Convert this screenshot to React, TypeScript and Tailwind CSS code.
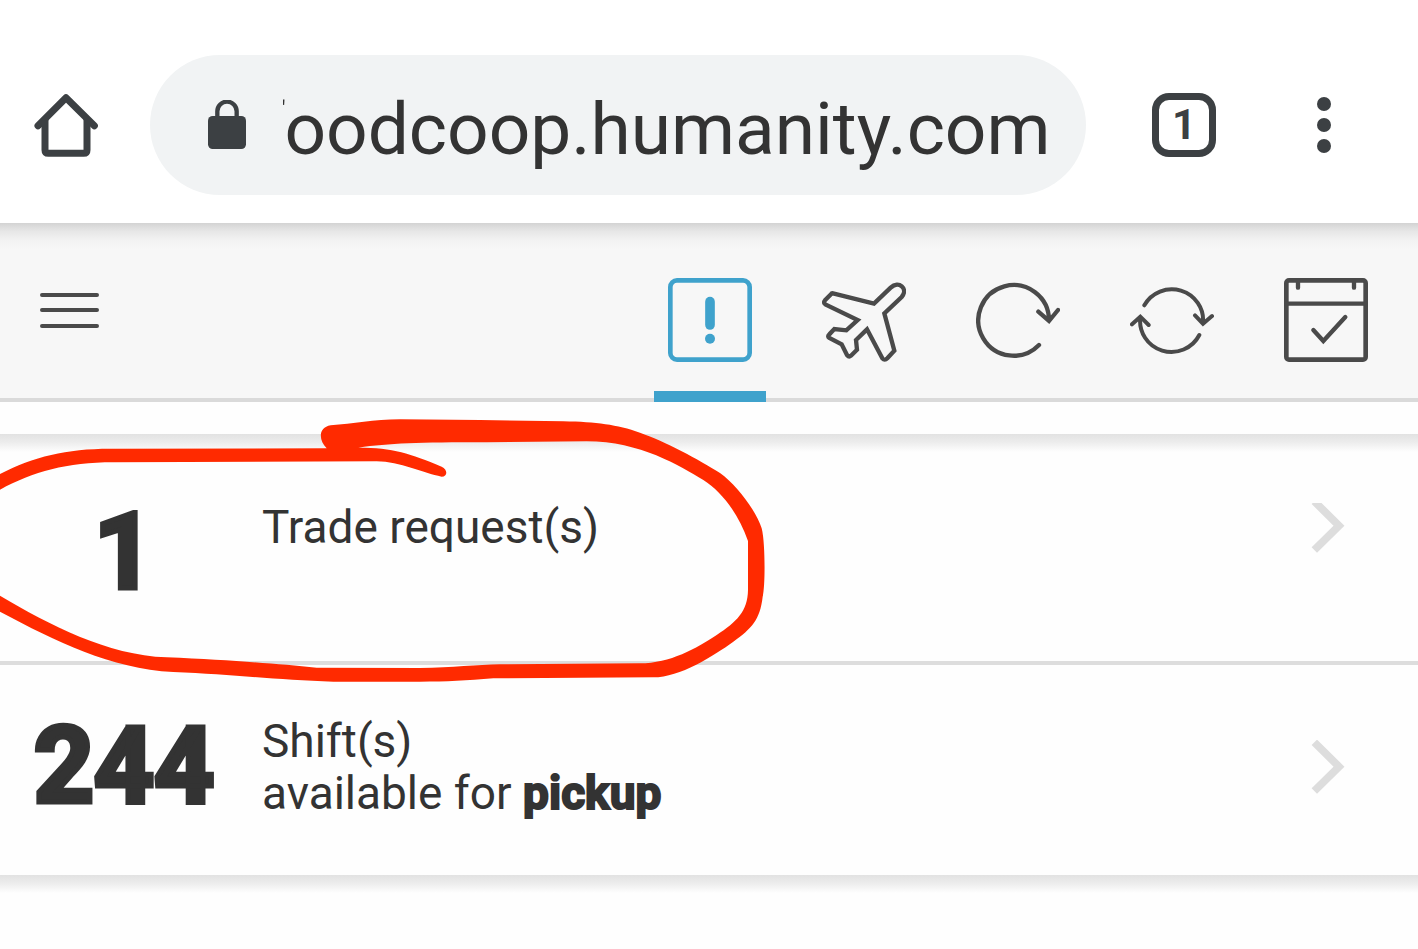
import { useLayoutEffect, useRef, type ReactNode } from "react";

function HomeIcon() {
  return (
    <svg viewBox="102 98 192 192" className="size-16" fill="none" stroke="#3c4043" strokeWidth="21" aria-hidden="true">
      <path d="M114 196 198 112 283 196" strokeLinecap="round" strokeLinejoin="round" />
      <path d="M135 176V269Q135 279 145 279H251Q261 279 261 269V176" />
    </svg>
  );
}

function LockIcon() {
  return (
    <svg viewBox="624 118 114 150" className="h-[50px] w-[38px] shrink-0" aria-hidden="true">
      <path d="M652 175V152a29 29 0 0 1 58 0V175" fill="none" stroke="#3c4043" strokeWidth="13" />
      <rect x="624" y="166" width="114" height="99" rx="14" fill="#3c4043" />
    </svg>
  );
}

function AlertIcon() {
  return (
    <>
      <rect x="7" y="7" width="238" height="238" rx="20" strokeWidth="14" />
      <path d="M126 71V141" strokeWidth="29" />
      <circle cx="126" cy="182" r="15" fill="currentColor" stroke="none" />
    </>
  );
}

function PlaneIcon() {
  return (
    <path d="M33 46 156 77 206 29C230 6 260 32 239 57L187 106 217 218 196 241Q188 249 181 241L135 154 102 186 105 215 87 233Q81 238 75 231L59 199 22 180Q15 175 22 169L37 153 73 157 107 126 10 79Q3 74 9 67L27 49Q29 45 33 46Z" />
  );
}

function RedoIcon() {
  return <path d="M189 201A106 106 0 1 1 219 127M187 101 219 129 246 96" />;
}

function SwapIcon() {
  return (
    <path
      strokeWidth="12"
      d="M43 82A94 93 0 0 1 219 135M195 112 219 137 246 114M208 171A94 93 0 0 1 31 117M6 139 31 116 56 141"
    />
  );
}

function CalendarIcon() {
  return (
    <>
      <rect x="7" y="7" width="238" height="238" rx="8" strokeWidth="14" />
      <path d="M7 77H245M42 10V29M210 10V29M88 156 118 189 184 117" />
    </>
  );
}

const tabs: { label: string; icon: ReactNode; active?: boolean }[] = [
  { label: "Alerts", icon: <AlertIcon />, active: true },
  { label: "Vacation", icon: <PlaneIcon /> },
  { label: "Reload", icon: <RedoIcon /> },
  { label: "Trades", icon: <SwapIcon /> },
  { label: "Shifts", icon: <CalendarIcon /> },
];

function BrowserBar() {
  const url = useRef<HTMLInputElement>(null);

  // Keep the end of the address in view when it is longer than the field.
  useLayoutEffect(() => {
    if (url.current) url.current.scrollLeft = url.current.scrollWidth;
  }, []);

  return (
    <header className="flex items-center bg-white pt-[55px] pr-[87px] pb-7 pl-[34px]">
      <button type="button" aria-label="Home">
        <HomeIcon />
      </button>
      <div className="mr-[66px] ml-[52px] flex h-[140px] min-w-0 flex-1 items-center rounded-full bg-[#f1f3f4] pr-[35px] pl-[58px]">
        <LockIcon />
        <input
          ref={url}
          aria-label="Address"
          readOnly
          defaultValue="foodcoop.humanity.com"
          className="mt-2 ml-[37px] w-full min-w-0 text-[73px] leading-[88px] text-[#333] outline-none"
        />
      </div>
      <button
        type="button"
        aria-label="Open tabs"
        className="flex size-16 items-center justify-center rounded-[17px] border-[7px] border-[#3c4043] text-[42px] leading-none font-bold text-[#3c4043]"
      >
        1
      </button>
      <button type="button" aria-label="Menu" className="ml-[101px]">
        <svg viewBox="0 0 14 56" className="h-14 w-3.5" fill="#3c4043" aria-hidden="true">
          <circle cx="7" cy="7" r="7" />
          <circle cx="7" cy="28" r="7" />
          <circle cx="7" cy="49" r="7" />
        </svg>
      </button>
    </header>
  );
}

function AppBar() {
  return (
    <nav className="flex justify-between border-b-4 border-[#dadada] bg-[#f7f7f7] bg-[linear-gradient(#d3d3d3,#e6e6e6_8px,#f2f2f2_17px,#f7f7f7_26px)] pr-9 pl-10">
      <button type="button" aria-label="Open navigation" className="self-start pt-[70px]">
        <svg viewBox="0 0 59 36" className="h-9 w-[59px]" stroke="#4a4a4a" strokeWidth="4" strokeLinecap="round" aria-hidden="true">
          <path d="M2 2H57M2 17H57M2 33H57" />
        </svg>
      </button>
      <div className="-mb-1 flex gap-[42px]">
        {tabs.map((tab) => (
          <button
            key={tab.label}
            type="button"
            aria-label={tab.label}
            className={
              tab.active
                ? "w-28 border-b-[11px] border-[#3fa2cc] px-3.5 pt-[55px] pb-[29px] text-[#3fa2cc]"
                : "w-28 border-b-[11px] border-transparent px-3.5 pt-[55px] pb-[29px] text-[#4a4a4a]"
            }
          >
            <svg
              viewBox="0 0 252 252"
              className="size-21"
              fill="none"
              stroke="currentColor"
              strokeWidth="13"
              strokeLinecap="round"
              aria-hidden="true"
            >
              {tab.icon}
            </svg>
          </button>
        ))}
      </div>
    </nav>
  );
}

function Scribble() {
  return (
    <svg viewBox="0 42 2340 840" className="pointer-events-none absolute -top-5 left-0 h-[280px] w-[780px]" fill="#ff2a00" aria-hidden="true">
      <path d="M0 222C100 170 200 146 330 146L980 145C955 120 955 82 992 76C1060 72 1120 58 1200 58L1440 60 1690 64C1790 66 1850 74 1920 98C1990 122 2100 180 2160 219C2210 254 2270 335 2285 385C2296 425 2296 560 2288 590C2280 660 2255 685 2200 725C2140 768 2040 832 1960 832L1480 835C1400 842 1340 845 1260 845L1000 845C830 840 700 823 520 816C330 805 170 725 0 635V587C150 675 320 765 500 772C700 781 830 791 950 803L1260 804C1360 803 1430 794 1500 793L1920 790C2010 790 2090 745 2150 705C2210 665 2243 635 2244 570L2244 423C2215 340 2165 275 2110 240C2040 198 1920 124 1760 124L1460 127C1250 127 1170 130 1075 143C1180 143 1230 160 1325 200C1345 210 1342 230 1325 230C1270 220 1200 184 1130 184L340 187C200 187 100 215 0 269Z" />
    </svg>
  );
}

function Chevron({ cropped }: { cropped?: boolean }) {
  return (
    <svg
      viewBox={cropped ? "330 795 105 150" : "330 783 105 162"}
      className={cropped ? "mt-0.5 h-[50px] w-[35px]" : "h-[54px] w-[35px] self-center"}
      fill="none"
      stroke="#dddddd"
      strokeWidth="23"
      aria-hidden="true"
    >
      <path d="M343 790 417 863 343 936" />
    </svg>
  );
}

function Count({ value }: { value: number }) {
  return (
    <span className="w-[248px] text-center text-[105px] leading-[104px] font-bold [-webkit-text-stroke:5px_#333]">
      {value}
    </span>
  );
}

export default function App() {
  return (
    <div className="min-h-screen bg-[#fefefe] font-[Roboto,sans-serif] text-[#333]">
      <BrowserBar />
      <AppBar />
      <main className="relative mt-8">
        <ul className="text-[46px] leading-[52px]">
          <li className="border-b-4 border-[#dddddd] bg-[linear-gradient(#e2e2e2,#ececec_8px,#fefefe_18px)]">
            <a href="#trades" className="flex items-start pt-[67px] pr-[73px] pb-14">
              <Count value={1} />
              <span className="ml-3.5 flex-1">Trade request(s)</span>
              <Chevron cropped />
            </a>
          </li>
          <li>
            <a href="#pickup" className="flex items-start pt-[50px] pr-[73px] pb-14">
              <Count value={244} />
              <span className="ml-3.5 flex-1">
                Shift(s)
                <br />
                available for <strong className="font-bold [-webkit-text-stroke:2px_#333]">pickup</strong>
              </span>
              <Chevron />
            </a>
          </li>
        </ul>
        <div className="h-[18px] bg-[linear-gradient(#e2e2e2,#ececec_8px,#fefefe_18px)]" />
        <Scribble />
      </main>
    </div>
  );
}
